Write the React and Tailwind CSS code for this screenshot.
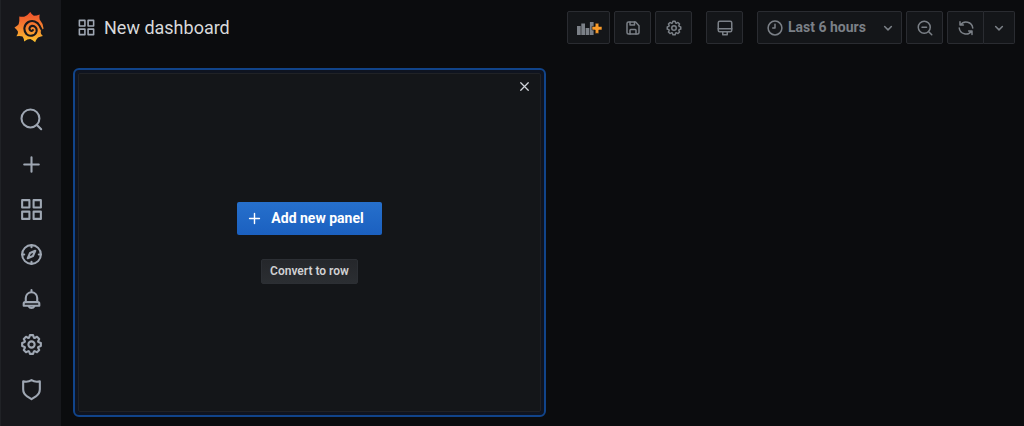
import React from "react";

function Icon({ className, children }) {
  return (
    <svg
      viewBox="0 0 24 24"
      fill="none"
      stroke="currentColor"
      strokeWidth="2"
      strokeLinecap="round"
      strokeLinejoin="round"
      aria-hidden="true"
      className={`shrink-0 ${className}`}
    >
      {children}
    </svg>
  );
}

function Logo({ className }) {
  return (
    <svg viewBox="14 12 96 99" className={className} aria-hidden="true">
      <defs>
        <linearGradient id="flame" x1="0" y1="0" x2="0" y2="1">
          <stop offset="0" stopColor="#f0502c" />
          <stop offset="0.5" stopColor="#f58230" />
          <stop offset="1" stopColor="#fbc32d" />
        </linearGradient>
      </defs>
      <path
        d="M66 15Q71 24 77 27Q86 27 95 23Q93 33 95 38Q105 49 107 66L98 76Q97 82 105 89Q95 91 90 94Q84 100 81 109Q73 101 66 99Q57 99 47 106Q46 96 42 91Q35 88 23 90Q29 81 28 76Q25 70 17 63Q27 58 30 53Q33 45 32 29Q43 31 49 29Q58 25 66 15Z"
        fill="url(#flame)"
      />
      <path
        d="M108 76C101 74 99 66 95 58C88 44 73 39 60 46C46 54 44 72 54 83C64 93 81 89 85 76C88 65 80 57 71 58C63 60 61 69 67 73C70 75 73 73 74 71"
        fill="none"
        stroke="#17181c"
        strokeWidth="6.5"
        strokeLinecap="round"
      />
    </svg>
  );
}

const GEAR =
  "M21.32,9.55l-1.89-.63.89-1.78A1,1,0,0,0,20.13,6L18,3.87a1,1,0,0,0-1.15-.19l-1.78.89-.63-1.89A1,1,0,0,0,13.5,2h-3a1,1,0,0,0-.95.68L8.92,4.57,7.14,3.68A1,1,0,0,0,6,3.87L3.87,6a1,1,0,0,0-.19,1.15l.89,1.78-1.89.63A1,1,0,0,0,2,10.5v3a1,1,0,0,0,.68.95l1.89.63-.89,1.78A1,1,0,0,0,3.87,18L6,20.13a1,1,0,0,0,1.15.19l1.78-.89.63,1.89a1,1,0,0,0,.95.68h3a1,1,0,0,0,.95-.68l.63-1.89,1.78.89A1,1,0,0,0,18,20.13L20.13,18a1,1,0,0,0,.19-1.15l-.89-1.78,1.89-.63A1,1,0,0,0,22,13.5v-3A1,1,0,0,0,21.32,9.55ZM20,12.78l-1.2.4A2,2,0,0,0,17.64,16l.57,1.14-1.1,1.1L16,17.64a2,2,0,0,0-2.79,1.16l-.4,1.2H11.22l-.4-1.2A2,2,0,0,0,8,17.64l-1.14.57-1.1-1.1L6.36,16A2,2,0,0,0,5.2,13.18L4,12.78V11.22l1.2-.4A2,2,0,0,0,6.36,8L5.79,6.89l1.1-1.1L8,6.36A2,2,0,0,0,10.82,5.2l.4-1.2h1.56l.4,1.2A2,2,0,0,0,16,6.36l1.14-.57,1.1,1.1L17.64,8a2,2,0,0,0,1.16,2.79l1.2.4ZM12,8a4,4,0,1,0,4,4A4,4,0,0,0,12,8Zm0,6a2,2,0,1,1,2-2A2,2,0,0,1,12,14Z";

const shapes = {
  search: (
    <>
      <circle cx="11" cy="11" r="8.6" />
      <path d="M17.2 17.2 21.3 21.3" />
    </>
  ),
  plus: <path d="M12 5v14M5 12h14" />,
  apps: (
    <>
      <rect x="3" y="3" width="7" height="7" />
      <rect x="14" y="3" width="7" height="7" />
      <rect x="3" y="14" width="7" height="7" />
      <rect x="14" y="14" width="7" height="7" />
    </>
  ),
  compass: (
    <>
      <circle cx="12" cy="12" r="9" />
      <path d="M12 3v2M12 19v2M3 12h2M19 12h2" />
      <path d="M15.6 8.4 13.4 13.4 8.4 15.6 10.6 10.6z" />
    </>
  ),
  bell: (
    <>
      <path d="M12 3v2M6.500 14v-3.500a5.500 5.500 0 0 1 11 0V14" />
      <path d="M6 14.500h12a1.500 1.500 0 0 1 1.500 1.500v2h-15v-2A1.500 1.500 0 0 1 6 14.500z" />
      <path d="M9.3 18.5a3 3 0 0 0 5.4 0" />
    </>
  ),
  gear: <path d={GEAR} fill="currentColor" stroke="none" />,
  shield: (
    <path d="M12 3c-2.200 1.500-4.900 1.900-8 1.200v7.500c0 3 1.400 5.200 3.800 6.900L12 21.200l4.200-2.600c2.400-1.700 3.800-3.900 3.800-6.900V4.200c-3.100.7-5.800.3-8-1.200z" />
  ),
  save: (
    <>
      <path d="M4 6a2 2 0 0 1 2-2h9.500L20 9v9a2 2 0 0 1-2 2H6a2 2 0 0 1-2-2z" />
      <path d="M8 4v4h6V4M8 20v-5a1 1 0 0 1 1-1h6a1 1 0 0 1 1 1v5" />
    </>
  ),
  monitor: (
    <>
      <rect x="3" y="3" width="18" height="14" rx="2" />
      <path d="M3 13h18M9 17v4h6v-4" />
    </>
  ),
  clock: (
    <>
      <circle cx="12" cy="12" r="9.2" />
      <path d="M12 7v5H9" />
    </>
  ),
  down: <path d="m7.500 10 4.500 4.500L16.500 10" />,
  zoomOut: (
    <>
      <circle cx="11" cy="11" r="8" />
      <path d="M8 11h6M17 17l4 4" />
    </>
  ),
  sync: (
    <>
      <path d="M4 3.500V8h4.500M4.600 8A9 9 0 0 1 21 12" />
      <path d="M20 20.500V16h-4.500M19.400 16A9 9 0 0 1 3 12" />
    </>
  ),
  close: <path d="M6 6l12 12M18 6 6 18" />,
};

const navItems = [
  ["Search", "search"],
  ["Create", "plus"],
  ["Dashboards", "apps"],
  ["Explore", "compass"],
  ["Alerting", "bell"],
  ["Configuration", "gear"],
  ["Server admin", "shield"],
];

function Sidebar() {
  return (
    <nav className="flex w-[61px] shrink-0 flex-col items-center border-l border-[#202226] bg-[#17181c] pb-4">
      <a href="#home" aria-label="Home" className="flex h-[97px] w-full items-start pt-[11px] pl-3">
        <Logo className="size-8" />
      </a>
      {navItems.map(([label, icon]) => (
        <a
          key={label}
          href={`#${icon}`}
          aria-label={label}
          className="flex h-[45px] w-full items-center justify-center text-[#9fa7b3]"
        >
          <Icon className="size-[25px]">{shapes[icon]}</Icon>
        </a>
      ))}
    </nav>
  );
}

function ToolButton({ label, className = "w-[37px] rounded-xs", children }) {
  return (
    <button
      type="button"
      aria-label={label}
      className={`flex h-[33px] items-center justify-center border border-[#2a2c31] bg-[#141619] text-[#7b8087] ${className}`}
    >
      {children}
    </button>
  );
}

function Toolbar() {
  return (
    <header className="flex items-center justify-between pt-[11px] pr-[9px] pl-4">
      <div className="flex items-center gap-2 text-[#d8d9da]">
        <Icon className="size-[19px] text-[#9fa7b3]">{shapes.apps}</Icon>
        <h1 className="text-lg">New dashboard</h1>
      </div>
      <div className="flex items-center gap-1">
        <ToolButton label="Add panel" className="w-[43px] rounded-xs">
          <svg viewBox="0 0 26 14" className="h-[14px] w-[26px]" aria-hidden="true">
            <path
              d="M1 5h3.700v9H1zM5.300 2.500H9V14H5.300zM9.600 7h3.700v7H9.600zM13.900 1h3.700v13h-3.700z"
              fill="currentColor"
            />
            <path
              d="M19.200 2.200h3.600v3.200H26V9h-3.200v3.400h-3.600V9H16V5.400h3.200z"
              fill="#f99b2a"
              stroke="#141619"
              strokeWidth="0.6"
            />
          </svg>
        </ToolButton>
        <ToolButton label="Save dashboard">
          <Icon className="size-[18px]">{shapes.save}</Icon>
        </ToolButton>
        <ToolButton label="Dashboard settings">
          <Icon className="size-[18px]">{shapes.gear}</Icon>
        </ToolButton>
        <div className="mx-[10px]">
          <ToolButton label="Cycle view mode">
            <Icon className="size-[18px]">{shapes.monitor}</Icon>
          </ToolButton>
        </div>
        <ToolButton label="Last 6 hours" className="w-[145px] rounded-xs pr-1 pl-2">
          <Icon className="size-[18px]">{shapes.clock}</Icon>
          <span className="ml-1 flex-1 pb-px text-left text-sm font-bold">Last 6 hours</span>
          <Icon className="size-[18px]">{shapes.down}</Icon>
        </ToolButton>
        <ToolButton label="Zoom out time range">
          <Icon className="size-[18px]">{shapes.zoomOut}</Icon>
        </ToolButton>
        <div className="flex">
          <ToolButton label="Refresh dashboard" className="w-[37px] rounded-l-xs">
            <Icon className="size-[18px]">{shapes.sync}</Icon>
          </ToolButton>
          <ToolButton label="Refresh interval" className="w-[31px] rounded-r-xs border-l-0">
            <Icon className="size-[18px]">{shapes.down}</Icon>
          </ToolButton>
        </div>
      </div>
    </header>
  );
}

function AddPanel() {
  return (
    <section className="flex h-[349px] rounded-md border-2 border-[#11448a] bg-[#0f1420] p-[3px]">
      <div className="flex flex-1 flex-col rounded-xs border border-[#202226] bg-[#141619]">
        <div className="flex justify-end px-2 pt-1">
          <button type="button" aria-label="Close" className="flex size-4 items-center justify-center text-[#d0d4da]">
            <Icon className="size-[15px]">{shapes.close}</Icon>
          </button>
        </div>
        <div className="flex flex-1 flex-col items-center justify-center gap-6 pb-5">
          <button
            type="button"
            className="flex h-[33px] items-center gap-2 rounded-xs bg-linear-to-b from-[#2670cc] to-[#1b60c0] pr-[18px] pl-[9px] text-sm font-bold text-white"
          >
            <Icon className="size-[17px]">{shapes.plus}</Icon>
            Add new panel
          </button>
          <button
            type="button"
            className="h-[25px] rounded-xs border border-[#2c2f34] bg-linear-to-b from-[#25272b] to-[#2b2e32] px-2 text-xs font-semibold text-[#d0d1d3]"
          >
            Convert to row
          </button>
        </div>
      </div>
    </section>
  );
}

export default function App() {
  return (
    <div className="flex min-h-screen bg-[#0b0c0e] font-[Roboto,sans-serif] antialiased">
      <Sidebar />
      <main className="min-w-0 flex-1">
        <Toolbar />
        <div className="grid grid-cols-2 pt-6 pr-[5px] pl-3">
          <AddPanel />
        </div>
      </main>
    </div>
  );
}
